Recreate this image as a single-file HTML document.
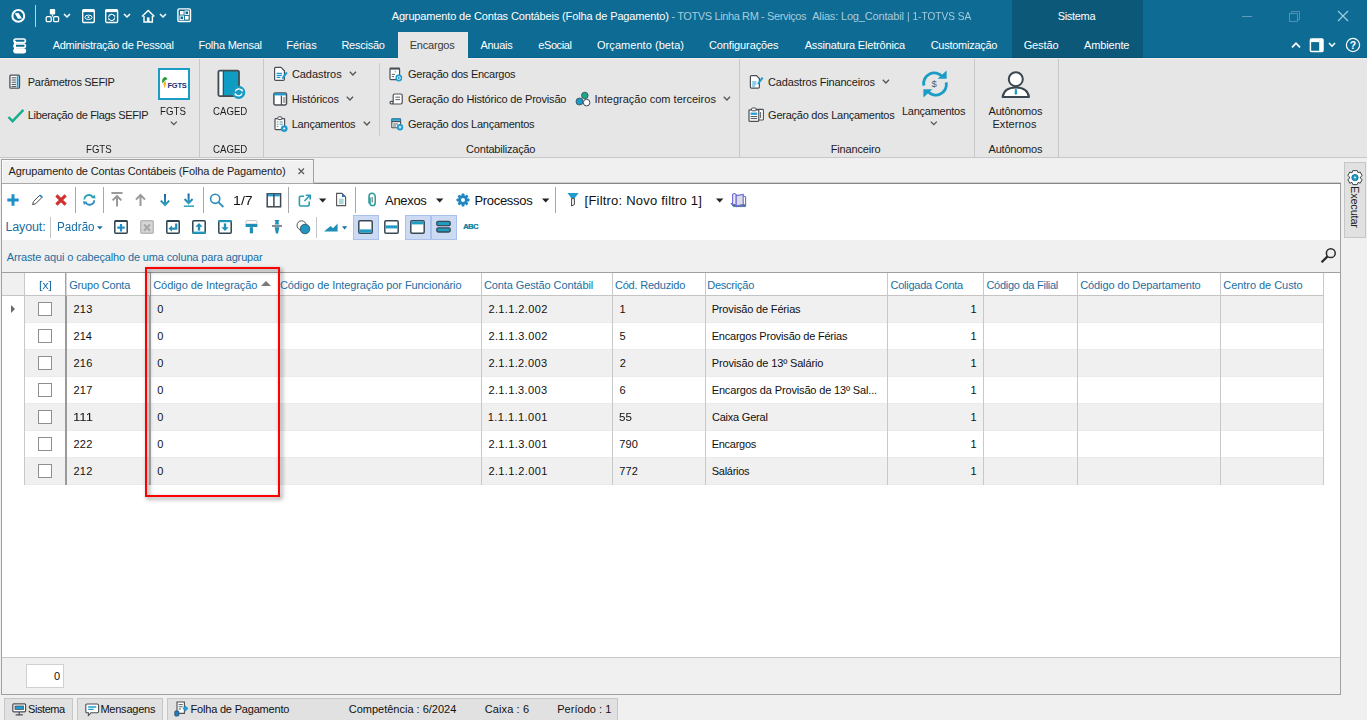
<!DOCTYPE html>
<html lang="pt-BR"><head><meta charset="utf-8"><title>Agrupamento de Contas Contábeis (Folha de Pagamento)</title>
<style>
html,body{margin:0;padding:0;background:#f0f0f0;}
body{width:1367px;height:720px;overflow:hidden;font-family:"Liberation Sans",sans-serif;}
#app{position:relative;width:1367px;height:720px;overflow:hidden;background:#f0f0f0;}
.t{position:absolute;white-space:pre;line-height:16px;height:16px;}
.b{position:absolute;box-sizing:border-box;}
svg{position:absolute;overflow:visible;}

</style></head><body>
<div id="app">
<div class="b" style="left:0px;top:0px;width:1367px;height:58px;background:#0d6b94;"></div>
<div class="b" style="left:1012px;top:0px;width:131px;height:58px;background:#0c5879;"></div>
<div class="b" style="left:398px;top:32px;width:70px;height:26px;background:#e6e6e6;"></div>
<div class="b" style="left:0px;top:57px;width:1012px;height:1px;background:#03628e;"></div>
<div class="b" style="left:1143px;top:57px;width:224px;height:1px;background:#03628e;"></div>
<div class="b" style="left:1012px;top:57px;width:131px;height:1px;background:#0a4f6e;"></div>
<div class="b" style="left:0px;top:58px;width:1367px;height:99px;background:#e6e6e6;"></div>
<div class="b" style="left:0px;top:58px;width:1367px;height:1px;background:#f3efee;"></div>
<div class="b" style="left:398px;top:57px;width:70px;height:2px;background:#e6e6e6;"></div>
<div class="b" style="left:0px;top:157px;width:1367px;height:1px;background:#c8c8c8;"></div>
<div class="b" style="left:199px;top:59px;width:1px;height:98px;background:#c8c8c8;"></div>
<div class="b" style="left:263px;top:59px;width:1px;height:98px;background:#c8c8c8;"></div>
<div class="b" style="left:739px;top:59px;width:1px;height:98px;background:#c8c8c8;"></div>
<div class="b" style="left:974px;top:59px;width:1px;height:98px;background:#c8c8c8;"></div>
<div class="b" style="left:1058px;top:59px;width:1px;height:98px;background:#c8c8c8;"></div>
<div class="b" style="left:379px;top:63px;width:1px;height:73px;background:#cdcdcd;"></div>
<div class="b" style="left:1px;top:183px;width:1340px;height:512px;background:#ffffff;border:1px solid #a0a0a0;border-top-color:#878787;"></div>
<div class="b" style="left:314px;top:182px;width:1027px;height:1px;background:#cfcfcf;"></div>
<div class="b" style="left:1px;top:159px;width:313px;height:25px;background:#f0f0f0;border:1px solid #a0a0a0;border-bottom:1px solid #a8a8a8;box-shadow:inset 1px 1px 0 #fbfbfb;"></div>
<div class="b" style="left:2px;top:240px;width:1338px;height:32px;background:#f0f0f0;"></div>
<div class="b" style="left:2px;top:272px;width:1338px;height:1px;background:#a0a0a0;"></div>
<div class="b" style="left:2px;top:273px;width:22px;height:22px;background:#f0f0f0;"></div>
<div class="b" style="left:2px;top:295px;width:1322px;height:1px;background:#c4c4c4;"></div>
<div class="b" style="left:25px;top:296px;width:1298px;height:27px;background:#f0f0f0;"></div>
<div class="b" style="left:25px;top:322px;width:1298px;height:1px;background:#ebebeb;"></div>
<div class="b" style="left:38px;top:302px;width:14px;height:14px;background:#ffffff;border:1px solid #8f8f8f;"></div>
<div class="b" style="left:25px;top:349px;width:1298px;height:1px;background:#ebebeb;"></div>
<div class="b" style="left:38px;top:329px;width:14px;height:14px;background:#ffffff;border:1px solid #8f8f8f;"></div>
<div class="b" style="left:25px;top:350px;width:1298px;height:27px;background:#f0f0f0;"></div>
<div class="b" style="left:25px;top:376px;width:1298px;height:1px;background:#ebebeb;"></div>
<div class="b" style="left:38px;top:356px;width:14px;height:14px;background:#ffffff;border:1px solid #8f8f8f;"></div>
<div class="b" style="left:25px;top:403px;width:1298px;height:1px;background:#ebebeb;"></div>
<div class="b" style="left:38px;top:383px;width:14px;height:14px;background:#ffffff;border:1px solid #8f8f8f;"></div>
<div class="b" style="left:25px;top:404px;width:1298px;height:27px;background:#f0f0f0;"></div>
<div class="b" style="left:25px;top:430px;width:1298px;height:1px;background:#ebebeb;"></div>
<div class="b" style="left:38px;top:410px;width:14px;height:14px;background:#ffffff;border:1px solid #8f8f8f;"></div>
<div class="b" style="left:25px;top:457px;width:1298px;height:1px;background:#ebebeb;"></div>
<div class="b" style="left:38px;top:437px;width:14px;height:14px;background:#ffffff;border:1px solid #8f8f8f;"></div>
<div class="b" style="left:25px;top:458px;width:1298px;height:27px;background:#f0f0f0;"></div>
<div class="b" style="left:25px;top:484px;width:1298px;height:1px;background:#ebebeb;"></div>
<div class="b" style="left:38px;top:464px;width:14px;height:14px;background:#ffffff;border:1px solid #8f8f8f;"></div>
<div class="b" style="left:24px;top:273px;width:1px;height:212px;background:#c8c8c8;"></div>
<div class="b" style="left:278px;top:273px;width:1px;height:212px;background:#c8c8c8;"></div>
<div class="b" style="left:481px;top:273px;width:1px;height:212px;background:#c8c8c8;"></div>
<div class="b" style="left:612px;top:273px;width:1px;height:212px;background:#c8c8c8;"></div>
<div class="b" style="left:705px;top:273px;width:1px;height:212px;background:#c8c8c8;"></div>
<div class="b" style="left:887px;top:273px;width:1px;height:212px;background:#c8c8c8;"></div>
<div class="b" style="left:983px;top:273px;width:1px;height:212px;background:#c8c8c8;"></div>
<div class="b" style="left:1077px;top:273px;width:1px;height:212px;background:#c8c8c8;"></div>
<div class="b" style="left:1220px;top:273px;width:1px;height:212px;background:#c8c8c8;"></div>
<div class="b" style="left:1323px;top:273px;width:1px;height:212px;background:#c8c8c8;"></div>
<div class="b" style="left:1323px;top:273px;width:1px;height:23px;background:#c8c8c8;"></div>
<div class="b" style="left:65px;top:273px;width:1px;height:23px;background:#a4a4a4;"></div>
<div class="b" style="left:66px;top:273px;width:1px;height:22px;background:#d4d4d4;"></div>
<div class="b" style="left:65px;top:296px;width:2px;height:189px;background:#9a9a9a;"></div>
<div class="b" style="left:150px;top:273px;width:1px;height:23px;background:#a4a4a4;"></div>
<div class="b" style="left:149px;top:296px;width:2px;height:189px;background:#b4b4b4;"></div>
<svg style="left:11px;top:305px" width="5" height="8"><path d="M0 0 L4 4 L0 8 Z" fill="#6a6a6a"/></svg>
<svg style="left:261px;top:281px" width="10" height="5"><path d="M0 5 L5 0 L10 5 Z" fill="#7a7a7a"/></svg>
<div class="b" style="left:2px;top:657px;width:1338px;height:1px;background:#c8c8c8;"></div>
<div class="b" style="left:2px;top:658px;width:1338px;height:36px;background:#f0f0f0;"></div>
<div class="b" style="left:26px;top:664px;width:38px;height:24px;background:#ffffff;border:1px solid #d0d0d0;"></div>
<div class="b" style="left:4px;top:698px;width:69px;height:22px;background:#e1e1e1;border:1px solid #c6c6c6;border-bottom:none;"></div>
<div class="b" style="left:77px;top:698px;width:86px;height:22px;background:#e1e1e1;border:1px solid #c6c6c6;border-bottom:none;"></div>
<div class="b" style="left:167px;top:698px;width:451px;height:22px;background:#e1e1e1;border:1px solid #c6c6c6;border-bottom:none;"></div>
<div class="b" style="left:1344px;top:162px;width:22px;height:76px;background:#e1e1e1;border:1px solid #c6c6c6;"></div>
<div class="b" style="left:145px;top:267px;width:135px;height:230px;border:2px solid #f00;filter:drop-shadow(2px 2px 2px rgba(0,0,0,.5));"></div>
<div class="b" style="left:75px;top:187px;width:1px;height:26px;background:#a8a8a8;"></div>
<div class="b" style="left:103px;top:187px;width:1px;height:26px;background:#a8a8a8;"></div>
<div class="b" style="left:203px;top:187px;width:1px;height:26px;background:#a8a8a8;"></div>
<div class="b" style="left:288px;top:187px;width:1px;height:26px;background:#a8a8a8;"></div>
<div class="b" style="left:355px;top:187px;width:1px;height:26px;background:#a8a8a8;"></div>
<div class="b" style="left:555px;top:187px;width:1px;height:26px;background:#a8a8a8;"></div>
<div class="b" style="left:50px;top:217px;width:1px;height:21px;background:#c4c4c4;"></div>
<div class="b" style="left:316px;top:217px;width:1px;height:21px;background:#c4c4c4;"></div>
<div class="b" style="left:353px;top:215px;width:26px;height:25px;background:#ccdaf3;border:1px solid #a9c1ec;"></div>
<div class="b" style="left:405px;top:215px;width:26px;height:25px;background:#ccdaf3;border:1px solid #a9c1ec;"></div>
<div class="b" style="left:431px;top:215px;width:26px;height:25px;background:#ccdaf3;border:1px solid #a9c1ec;"></div>
<!-- title bar icons -->
<svg style="left:10px;top:8px" width="18" height="18" viewBox="0 0 18 18"><circle cx="8.3" cy="7.9" r="5.9" fill="none" stroke="#fff" stroke-width="2"/><path d="M4.6 5.2 L8.6 5 L12 10.6 L8 10.8 Z" fill="#fff"/></svg>
<div class="b" style="left:35px;top:5px;width:1px;height:22px;background:#b9d3e0"></div>
<svg style="left:45px;top:8px" width="16" height="16" viewBox="0 0 16 16"><rect x="4.8" y="1" width="5.4" height="5.6" rx="1" fill="#fff"/><rect x="1.2" y="8.6" width="5" height="5" rx="1.2" fill="none" stroke="#fff" stroke-width="1.3"/><rect x="8.6" y="8.6" width="5" height="5" rx="1.2" fill="none" stroke="#fff" stroke-width="1.3"/><path d="M7.5 6.6 V8.6" stroke="#fff" stroke-width="1.2"/></svg>
<svg style="left:63px;top:13px" width="8" height="6" viewBox="0 0 8 6"><path d="M1 1 L4 4 L7 1" fill="none" stroke="#fff" stroke-width="1.5"/></svg>
<svg style="left:82px;top:9px" width="14" height="15" viewBox="0 0 14 15"><rect x="0.7" y="0.7" width="11.6" height="12.8" rx="1.2" fill="none" stroke="#fff" stroke-width="1.4"/><rect x="0.7" y="0.7" width="11.6" height="2.4" fill="#fff"/><ellipse cx="6.5" cy="8.3" rx="3.6" ry="2.2" fill="none" stroke="#fff" stroke-width="1"/><circle cx="6.5" cy="8.3" r="1" fill="#fff"/></svg>
<svg style="left:105px;top:9px" width="14" height="15" viewBox="0 0 14 15"><rect x="0.7" y="0.7" width="11.9" height="12.8" rx="1.2" fill="none" stroke="#fff" stroke-width="1.4"/><rect x="0.7" y="0.7" width="11.9" height="2.4" fill="#fff"/><path d="M3.6 8.2 A3 3 0 0 1 9.2 6.8 M9.7 8.6 A3 3 0 0 1 4.1 10" fill="none" stroke="#fff" stroke-width="1.1"/><path d="M8.2 6.2 L10.3 6.2 L10 8.2 Z M5.1 10.6 L3 10.6 L3.3 8.6 Z" fill="#fff"/></svg>
<svg style="left:123px;top:13px" width="8" height="6" viewBox="0 0 8 6"><path d="M1 1 L4 4 L7 1" fill="none" stroke="#fff" stroke-width="1.5"/></svg>
<svg style="left:141px;top:9px" width="15" height="15" viewBox="0 0 15 15"><path d="M1 7.6 L7.2 1.4 L13.4 7.6" fill="none" stroke="#fff" stroke-width="1.4"/><path d="M3 7 V13 H11.4 V7" fill="none" stroke="#fff" stroke-width="1.4"/><rect x="5.9" y="8.4" width="2.6" height="4.6" fill="#fff"/></svg>
<svg style="left:159px;top:13px" width="8" height="6" viewBox="0 0 8 6"><path d="M1 1 L4 4 L7 1" fill="none" stroke="#fff" stroke-width="1.5"/></svg>
<svg style="left:177px;top:8px" width="15" height="15" viewBox="0 0 15 15"><rect x="0.9" y="0.9" width="12.6" height="12.6" rx="1.2" fill="none" stroke="#fff" stroke-width="1.4"/><rect x="3" y="3" width="3.6" height="3.6" fill="#fff"/><rect x="8" y="3" width="3.6" height="3.6" fill="none" stroke="#fff" stroke-width="1"/><rect x="3" y="8" width="3.6" height="3.6" fill="none" stroke="#fff" stroke-width="1"/><rect x="8" y="8" width="3.6" height="3.6" fill="#fff"/></svg>
<!-- window controls -->
<div class="b" style="left:1242px;top:16px;width:10px;height:1px;background:#5e9cba"></div>
<svg style="left:1289px;top:11px" width="11" height="11" viewBox="0 0 11 11"><path d="M2.5 2.5 V0.5 H10.5 V8.5 H8.5" fill="none" stroke="#4f91b1" stroke-width="1"/><rect x="0.5" y="2.5" width="8" height="8" fill="none" stroke="#4f91b1" stroke-width="1"/></svg>
<svg style="left:1338px;top:11px" width="10" height="10" viewBox="0 0 10 10"><path d="M0 0 L10 10 M10 0 L0 10" stroke="#a9cfe0" stroke-width="1.1"/></svg>
<!-- tab row icons -->
<svg style="left:13px;top:38px" width="14" height="16" viewBox="0 0 14 16"><rect x="1" y="1" width="11.4" height="3.6" rx="1.8" fill="none" stroke="#fff" stroke-width="1.6"/><rect x="1" y="6" width="11.4" height="3.6" rx="1.8" fill="none" stroke="#fff" stroke-width="1.6"/><rect x="1" y="11" width="11.4" height="3.6" rx="1.8" fill="#fff" stroke="#fff" stroke-width="1.6"/><path d="M2 2.8 V13" stroke="#fff" stroke-width="2"/></svg>
<svg style="left:1291px;top:41px" width="10" height="8" viewBox="0 0 10 8"><path d="M1 6.4 L5 2.2 L9 6.4" fill="none" stroke="#fff" stroke-width="1.8"/></svg>
<svg style="left:1309px;top:38px" width="15" height="15" viewBox="0 0 15 15"><rect x="1.4" y="0.9" width="12.6" height="12.6" rx="1" fill="none" stroke="#fff" stroke-width="1.5"/><rect x="1.4" y="0.9" width="9" height="3.2" fill="#fff"/><rect x="10.2" y="0.9" width="3.8" height="12.6" fill="#fff"/></svg>
<svg style="left:1328px;top:42px" width="8" height="6" viewBox="0 0 8 6"><path d="M1 1 L4 4.2 L7 1" fill="none" stroke="#fff" stroke-width="1.5"/></svg>
<svg style="left:1345px;top:37px" width="16" height="16" viewBox="0 0 16 16"><circle cx="8" cy="8" r="6.6" fill="none" stroke="#fff" stroke-width="1.2"/><text x="8" y="12" font-family="Liberation Sans, sans-serif" font-size="10.5" font-weight="bold" fill="#fff" text-anchor="middle">?</text></svg>
<!-- doc tab close -->
<svg style="left:298px;top:168px" width="7" height="7" viewBox="0 0 7 7"><path d="M0.5 0.5 L6 6 M6 0.5 L0.5 6" stroke="#555" stroke-width="1.1"/></svg>
<!-- search icon (group panel) -->
<svg style="left:1320px;top:247px" width="17" height="17" viewBox="0 0 17 17"><circle cx="10.8" cy="6.2" r="4.4" fill="none" stroke="#2a2a2a" stroke-width="1.5"/><path d="M7.6 9.4 L1.6 15.2" stroke="#2a2a2a" stroke-width="2.2"/></svg>
<!-- toolbar row 1 -->
<svg style="left:7px;top:194px" width="12" height="12" viewBox="0 0 12 12"><path d="M6 0.3 V11.7 M0.3 6 H11.7" stroke="#1f8fc9" stroke-width="3"/></svg>
<svg style="left:31px;top:193px" width="13" height="13" viewBox="0 0 13 13"><path d="M1.6 11.6 L2.4 8.6 L9 2 L11.2 4.2 L4.6 10.8 Z" fill="#fff" stroke="#4a4a4a" stroke-width="1"/><path d="M8.2 2.8 L9.6 1.4 L11.8 3.6 L10.4 5 Z" fill="#2b8fd6"/></svg>
<svg style="left:55px;top:194px" width="12" height="12" viewBox="0 0 12 12"><path d="M1.4 1.4 L10.6 10.6 M10.6 1.4 L1.4 10.6" stroke="#d23030" stroke-width="3.2"/></svg>
<svg style="left:82px;top:193px" width="15" height="14" viewBox="0 0 15 14"><path d="M2.4 6.6 A4.6 4.6 0 0 1 11 4.4" fill="none" stroke="#2a9cb4" stroke-width="1.8"/><path d="M12.2 7.2 A4.6 4.6 0 0 1 3.6 9.4" fill="none" stroke="#2a8fc0" stroke-width="1.8"/><path d="M9.2 5 L13.6 5.6 L12.6 1.8 Z" fill="#2a9cb4"/><path d="M5.4 8.8 L1 8.2 L2 12 Z" fill="#2a8fc0"/></svg>
<svg style="left:111px;top:192px" width="12" height="15" viewBox="0 0 12 15"><path d="M0.4 1 H11.6" stroke="#9a9a9a" stroke-width="2"/><path d="M6 14.6 V4.6 M1.6 8.4 L6 4 L10.4 8.4" fill="none" stroke="#9a9a9a" stroke-width="2"/></svg>
<svg style="left:135px;top:193px" width="11" height="14" viewBox="0 0 11 14"><path d="M5.5 13 V2.2 M1 6.6 L5.5 2 L10 6.6" fill="none" stroke="#9a9a9a" stroke-width="2"/></svg>
<svg style="left:160px;top:193px" width="11" height="14" viewBox="0 0 11 14"><defs><linearGradient id="gd" x1="0" y1="0" x2="0" y2="1"><stop offset="0" stop-color="#1f5ca8"/><stop offset="1" stop-color="#2aa3ba"/></linearGradient></defs><path d="M5 1 V12 M0.8 7.6 L5 12 L9.2 7.6" fill="none" stroke="url(#gd)" stroke-width="2"/></svg>
<svg style="left:183px;top:193px" width="12" height="15" viewBox="0 0 12 15"><path d="M5.6 0.6 V10 M1.6 6 L5.6 10.2 L9.6 6" fill="none" stroke="url(#gd)" stroke-width="2"/><path d="M0.8 13.2 H11" stroke="#2aa3ba" stroke-width="1.5"/></svg>
<svg style="left:209px;top:193px" width="16" height="15" viewBox="0 0 16 15"><circle cx="6.2" cy="5.8" r="4.6" fill="none" stroke="#2a8fb8" stroke-width="1.6"/><path d="M9.4 9.2 L14.4 14" stroke="#2a8fb8" stroke-width="1.8"/></svg>
<svg style="left:266px;top:193px" width="16" height="15" viewBox="0 0 16 15"><rect x="1.2" y="0.8" width="13.4" height="13" fill="#fff" stroke="#404a52" stroke-width="1.5"/><rect x="2" y="1.2" width="11.8" height="2.2" fill="#1f9bd0"/><path d="M7.9 1 V14" stroke="#404a52" stroke-width="1.5"/></svg>
<svg style="left:298px;top:194px" width="14" height="14" viewBox="0 0 14 14"><path d="M6 2.2 H2.6 Q1.4 2.2 1.4 3.4 V10.8 Q1.4 12 2.6 12 H10 Q11.2 12 11.2 10.8 V7.6" fill="none" stroke="#2a9cb4" stroke-width="1.6"/><path d="M6.4 7 L11.6 1.8 M7.8 1.2 H12.2 V5.6" fill="none" stroke="#2a9cb4" stroke-width="1.6"/></svg>
<svg style="left:319px;top:198px" width="8" height="5" viewBox="0 0 8 5"><path d="M0 0.4 H7.4 L3.7 4.4 Z" fill="#222"/></svg>
<svg style="left:335px;top:192px" width="12" height="15" viewBox="0 0 12 15"><path d="M1.6 1.4 H7 L10.6 5 V13.6 H1.6 Z" fill="#fff" stroke="#555" stroke-width="1.1"/><path d="M7 1.4 L10.6 5 H7 Z" fill="#3a6fc0"/><rect x="4" y="6.6" width="4.6" height="5.6" fill="#a8d8d8"/></svg>
<svg style="left:368px;top:192px" width="10" height="16" viewBox="0 0 10 16"><path d="M2 5.4 V11 A2.6 2.6 0 0 0 7.2 11 V4.4 A3.1 3.1 0 0 0 1 4.4 V11.6" fill="none" stroke="#2a9a9a" stroke-width="1.5"/><path d="M4.2 5 V10.6" stroke="#777" stroke-width="1.2"/></svg>
<svg style="left:436px;top:198px" width="8" height="5" viewBox="0 0 8 5"><path d="M0 0.4 H7.4 L3.7 4.4 Z" fill="#222"/></svg>
<svg style="left:456px;top:193px" width="14" height="14" viewBox="0 0 14 14"><g transform="translate(7 7)" fill="#1f86c4"><circle r="4.6"/><g id="gt"><rect x="-1.5" y="-6.5" width="3" height="13" rx="0.8"/></g><use href="#gt" transform="rotate(45)"/><use href="#gt" transform="rotate(90)"/><use href="#gt" transform="rotate(135)"/><circle r="2" fill="#fff"/></g></svg>
<svg style="left:542px;top:198px" width="8" height="5" viewBox="0 0 8 5"><path d="M0 0.4 H7.4 L3.7 4.4 Z" fill="#222"/></svg>
<svg style="left:567px;top:192px" width="12" height="15" viewBox="0 0 12 15"><path d="M0.4 1 H11.6 L7.4 6.6 H4.6 Z" fill="#1f9bd0"/><path d="M4.6 6.6 H7.4 V12.4 L4.6 14 Z" fill="#fff" stroke="#444" stroke-width="1"/></svg>
<svg style="left:716px;top:198px" width="8" height="5" viewBox="0 0 8 5"><path d="M0 0.4 H7.4 L3.7 4.4 Z" fill="#222"/></svg>
<svg style="left:730px;top:192px" width="17" height="16" viewBox="0 0 17 16"><path d="M0.8 11 L3.4 14.6 H15.4 L14 12" fill="#3a7a6a" stroke="#3a7a6a" stroke-width="0.8"/><path d="M2.6 2.4 Q4.6 0.4 6.2 2.6 V14 Q4.6 11.6 2.6 13 Z" fill="#e6e6f4" stroke="#6a6ad8" stroke-width="1.1"/><path d="M6.2 3.6 L13.2 2.4 V12.6 L6.2 14 Z" fill="#dcdce8" stroke="#6a6ad8" stroke-width="1.1"/><path d="M13.2 4 L15.6 4.8 V14 L6.2 14" fill="none" stroke="#6a6ad8" stroke-width="1.1"/></svg>
<!-- toolbar row 2 -->
<svg style="left:97px;top:226px" width="6" height="4" viewBox="0 0 6 4"><path d="M0 0.2 H5.6 L2.8 3.6 Z" fill="#1a6ea3"/></svg>
<svg style="left:114px;top:220px" width="14" height="14" viewBox="0 0 14 14"><rect x="0.8" y="0.8" width="12.4" height="12.4" rx="1" fill="#fff" stroke="#2f4450" stroke-width="1.5"/><rect x="0.8" y="0.4" width="12.4" height="1.6" fill="#2f4450"/><path d="M7 4 V11.4 M3.3 7.7 H10.7" stroke="#1f8fc9" stroke-width="2.2"/></svg>
<svg style="left:140px;top:220px" width="14" height="14" viewBox="0 0 14 14"><rect x="0.8" y="0.8" width="12.4" height="12.4" rx="1" fill="#d6d6d6" stroke="#b8b8b8" stroke-width="1.5"/><path d="M4 4.6 L10 10.8 M10 4.6 L4 10.8" stroke="#a8a8a8" stroke-width="2.2"/></svg>
<svg style="left:166px;top:220px" width="14" height="14" viewBox="0 0 14 14"><rect x="0.8" y="0.8" width="12.4" height="12.4" rx="1" fill="#fff" stroke="#2f4450" stroke-width="1.5"/><rect x="0.8" y="0.4" width="12.4" height="1.6" fill="#2f4450"/><path d="M10.2 3.6 V8.6 H5" fill="none" stroke="#1f8fb8" stroke-width="2.2"/><path d="M6 5.4 V11.8 L2.4 8.6 Z" fill="#1f8fb8"/></svg>
<svg style="left:192px;top:220px" width="14" height="14" viewBox="0 0 14 14"><rect x="0.8" y="0.8" width="12.4" height="12.4" rx="1" fill="#fff" stroke="#2f4450" stroke-width="1.5"/><rect x="0.4" y="11.6" width="13.2" height="2.2" fill="#1f9bc4"/><path d="M7 10.6 V5.6" stroke="#1f8fb8" stroke-width="2.4"/><path d="M3.4 6.8 L7 3 L10.6 6.8 Z" fill="#1f8fb8"/></svg>
<svg style="left:218px;top:220px" width="14" height="14" viewBox="0 0 14 14"><rect x="0.8" y="0.8" width="12.4" height="12.4" rx="1" fill="#fff" stroke="#2f4450" stroke-width="1.5"/><rect x="0.4" y="0.2" width="13.2" height="2" fill="#1f9bc4"/><path d="M7 3.4 V8.4" stroke="#1f8fb8" stroke-width="2.4"/><path d="M3.4 7.2 L7 11 L10.6 7.2 Z" fill="#1f8fb8"/></svg>
<svg style="left:245px;top:220px" width="13" height="14" viewBox="0 0 13 14"><rect x="1" y="0.6" width="11" height="3.4" rx="0.8" fill="#fff" stroke="#c0c0c0" stroke-width="0.9"/><rect x="0.6" y="4" width="11.8" height="3" rx="0.6" fill="#1f8fb8"/><rect x="4.8" y="7" width="3.2" height="6.4" rx="1.2" fill="#1f8fb8"/></svg>
<svg style="left:271px;top:219px" width="12" height="16" viewBox="0 0 12 16"><path d="M3.6 1 H8.4 L7.4 3.4 L8.4 5.6 H3.6 L4.6 3.4 Z" fill="#1f8fb8"/><path d="M1 7 H11" stroke="#2f4450" stroke-width="1.2"/><path d="M3.6 8.2 H8.4 L7 14.6 H5 Z" fill="#1f8fb8"/></svg>
<svg style="left:296px;top:220px" width="15" height="15" viewBox="0 0 15 15"><circle cx="5.6" cy="5.4" r="4.6" fill="#fff" stroke="#555" stroke-width="1"/><circle cx="9" cy="9" r="4.8" fill="#1f95c0" stroke="#2f4450" stroke-width="0.8"/></svg>
<svg style="left:324px;top:223px" width="14" height="9" viewBox="0 0 14 9"><path d="M0 8.6 L6.6 3 L9 5.2 L13.6 0.4 V8.6 Z" fill="#1f8fb8"/></svg>
<svg style="left:342px;top:226px" width="6" height="4" viewBox="0 0 6 4"><path d="M0 0.2 H5.2 L2.6 3.4 Z" fill="#1a6ea3"/></svg>
<svg style="left:358px;top:220px" width="15" height="14" viewBox="0 0 15 14"><rect x="0.8" y="0.8" width="13.4" height="12.4" rx="1.2" fill="#fff" stroke="#3a4a54" stroke-width="1.5"/><rect x="1.4" y="9.4" width="12.2" height="3.2" fill="#1f9bc4"/></svg>
<svg style="left:384px;top:220px" width="15" height="14" viewBox="0 0 15 14"><rect x="0.8" y="0.8" width="13.4" height="12.4" rx="1.2" fill="#fff" stroke="#3a4a54" stroke-width="1.5"/><rect x="1.4" y="5.4" width="12.2" height="3" fill="#1f9bc4"/></svg>
<svg style="left:410px;top:220px" width="15" height="14" viewBox="0 0 15 14"><rect x="0.8" y="0.8" width="13.4" height="12.4" rx="1.2" fill="#fff" stroke="#3a4a54" stroke-width="1.5"/><rect x="1.4" y="1.4" width="12.2" height="3" fill="#1f9bc4"/></svg>
<svg style="left:436px;top:220px" width="15" height="14" viewBox="0 0 15 14"><rect x="0.8" y="1.4" width="13.4" height="4.2" rx="1.4" fill="#1f9bc4" stroke="#3a4a54" stroke-width="1.3"/><rect x="0.8" y="7.8" width="13.4" height="4.2" rx="1.4" fill="#1f9bc4" stroke="#3a4a54" stroke-width="1.3"/></svg>
<span class="t" style="left:463px;top:218.6px;font-size:7.5px;font-weight:bold;color:#1f8aa4;letter-spacing:-0.45px;text-shadow:0.4px 0 0 #1f8aa4">ABC</span>
<!-- ribbon: FGTS group -->
<svg style="left:9px;top:74px" width="12" height="16" viewBox="0 0 12 16"><rect x="0.9" y="1.2" width="9.6" height="13" rx="1" fill="#fff" stroke="#4a4f54" stroke-width="1.3"/><path d="M2.6 3.8 H7 M2.6 6 H7 M2.6 8.2 H7 M2.6 10.4 H7 M2.6 12.4 H7" stroke="#4a4f54" stroke-width="1"/><path d="M8.6 2.2 V13.4" stroke="#1f9bd0" stroke-width="1.8"/></svg>
<svg style="left:7px;top:108px" width="18" height="16" viewBox="0 0 18 16"><path d="M1.4 9 L5.6 13.2 L16.4 1.8" fill="none" stroke="#1aae8c" stroke-width="2.4"/></svg>
<div class="b" style="left:158px;top:68px;width:32px;height:32px;background:#fff;border:2px solid #1a9cc4"></div>
<svg style="left:160px;top:76px" width="9" height="14" viewBox="0 0 9 14"><path d="M4.4 1 Q1 3.4 2.6 7.4 Q4.2 4.2 7.6 3 Q6.6 1.2 4.4 1 Z" fill="#2c9a3c"/><path d="M3.4 8 Q3.6 5.6 6 5 Q6.4 8.4 4.4 12.6 Q4.4 10 3.4 8 Z" fill="#f2b21a"/></svg>
<span class="t" style="left:167.4px;top:77.5px;font-size:7.5px;font-weight:bold;color:#1c2f7a;letter-spacing:-0.2px">FGTS</span>
<svg style="left:170px;top:121px" width="8" height="5" viewBox="0 0 8 5"><path d="M0.8 0.6 L3.8 3.6 L6.8 0.6" fill="none" stroke="#555" stroke-width="1.3"/></svg>
<!-- CAGED -->
<svg style="left:216px;top:68px" width="32" height="34" viewBox="0 0 32 34"><rect x="2.4" y="2.6" width="20.6" height="25.6" rx="1.6" fill="#0e9cc2" stroke="#444b50" stroke-width="1.8"/><rect x="3.4" y="3.6" width="3.4" height="23.6" fill="#fff"/><path d="M7.4 3 V28" stroke="#444b50" stroke-width="1.2"/><circle cx="22.7" cy="24.4" r="6.6" fill="#1a9cc4"/><path d="M19.4 23.4 A3.5 3.5 0 0 1 25.6 22.4 M26 25.4 A3.5 3.5 0 0 1 19.8 26.4" fill="none" stroke="#fff" stroke-width="1.4"/><path d="M24.4 21.4 L27 21.6 L26.4 24.2 Z M21 27.4 L18.4 27.2 L19 24.6 Z" fill="#fff"/></svg>
<!-- Contabilização col 1 -->
<svg style="left:273px;top:66px" width="15" height="16" viewBox="0 0 15 16"><path d="M1.6 2.6 Q1.6 1.4 2.8 1.4 H8 L11.4 4.8 V13.2 Q11.4 14.4 10.2 14.4 H2.8 Q1.6 14.4 1.6 13.2 Z" fill="#fff" stroke="#4a4f54" stroke-width="1.2"/><path d="M3.6 7.4 H9 M3.6 9.4 H9 M3.6 11.4 H7.4" stroke="#1f9bd0" stroke-width="1.1"/><path d="M9.4 12.6 L13.8 6.4" stroke="#1f9bd0" stroke-width="2"/></svg>
<svg style="left:273px;top:92px" width="15" height="14" viewBox="0 0 15 14"><rect x="0.9" y="0.9" width="12.6" height="12" rx="1.4" fill="#fff" stroke="#4a4f54" stroke-width="1.5"/><rect x="1.2" y="1.2" width="12" height="2.2" fill="#1f9bd0"/><path d="M8.4 3.4 V13" stroke="#4a4f54" stroke-width="1.2"/><path d="M9.8 6 H12.2 M9.8 8 H12.2 M9.8 10 H12.2" stroke="#4a4f54" stroke-width="0.9"/></svg>
<svg style="left:274px;top:116px" width="15" height="17" viewBox="0 0 15 17"><rect x="1" y="2.6" width="9.6" height="11" rx="0.8" fill="#fff" stroke="#4a4f54" stroke-width="1.2"/><rect x="3.8" y="0.8" width="4" height="2.8" rx="0.8" fill="#fff" stroke="#4a4f54" stroke-width="1"/><path d="M2.8 6 H4.4 M5.6 6 H8.8 M2.8 8.2 H4.4 M5.6 8.2 H8.8 M2.8 10.4 H4.4" stroke="#4a8a9a" stroke-width="0.9"/><circle cx="10.2" cy="12.6" r="3.4" fill="#1f9bd0"/><circle cx="10.2" cy="12.6" r="1" fill="#fff"/></svg>
<svg style="left:349px;top:71px" width="8" height="6" viewBox="0 0 8 6"><path d="M0.8 0.8 L3.9 4 L7 0.8" fill="none" stroke="#555" stroke-width="1.3"/></svg>
<svg style="left:346px;top:96px" width="8" height="6" viewBox="0 0 8 6"><path d="M0.8 0.8 L3.9 4 L7 0.8" fill="none" stroke="#555" stroke-width="1.3"/></svg>
<svg style="left:363px;top:121px" width="8" height="6" viewBox="0 0 8 6"><path d="M0.8 0.8 L3.9 4 L7 0.8" fill="none" stroke="#555" stroke-width="1.3"/></svg>
<!-- Contabilização col 2 -->
<svg style="left:389px;top:67px" width="15" height="16" viewBox="0 0 15 16"><rect x="1" y="1.2" width="9.6" height="11.4" rx="0.8" fill="#fff" stroke="#4a4f54" stroke-width="1.2"/><rect x="1" y="1" width="9.6" height="1.6" fill="#4a4f54"/><path d="M2.8 7.4 H6 M2.8 9.6 H5" stroke="#4a4f54" stroke-width="0.9"/><path d="M5.6 4 L7 5.4" stroke="#1f9bd0" stroke-width="0.9"/><circle cx="9.8" cy="11" r="3.4" fill="#1f9bd0"/><circle cx="9.8" cy="11" r="1.5" fill="none" stroke="#fff" stroke-width="0.8"/></svg>
<svg style="left:389px;top:93px" width="15" height="13" viewBox="0 0 15 13"><path d="M4.2 8.4 V2.4 Q4.2 1 5.6 1 H11.8 Q13.2 1 13.2 2.4 V9.6 Q13.2 11 11.8 11 H2.4 Q1 11 1 9.6 Q1 8.4 2.4 8.4 H4.2 Q4.2 11 2.6 11" fill="#fff" stroke="#4a4f54" stroke-width="1.2"/><path d="M6.4 4.2 H11 M6.4 6.6 H11" stroke="#4a4f54" stroke-width="0.9"/></svg>
<svg style="left:391px;top:118px" width="13" height="13" viewBox="0 0 13 13"><rect x="0.8" y="0.8" width="8.8" height="9" rx="0.6" fill="#fff" stroke="#4a4f54" stroke-width="1.1"/><rect x="0.8" y="0.6" width="8.8" height="2.2" fill="#1f9bd0"/><rect x="0.8" y="3" width="8.8" height="1.2" fill="#4a4f54"/><path d="M2.2 6 H7 M2.2 8 H5" stroke="#4a4f54" stroke-width="0.9"/><circle cx="9" cy="9.2" r="3.2" fill="#1f9bd0"/><rect x="7.8" y="8" width="2.4" height="2.4" fill="#bfe6f4"/></svg>
<svg style="left:575px;top:91px" width="16" height="16" viewBox="0 0 16 16"><circle cx="9.8" cy="4.5" r="3.3" fill="#19a88c" stroke="#3a4a55" stroke-width="0.8"/><circle cx="4.5" cy="10.5" r="3.5" fill="#1e98c8" stroke="#3a4a55" stroke-width="0.8"/><circle cx="11.6" cy="11.6" r="3.3" fill="#fff" stroke="#3a4a55" stroke-width="1"/></svg>
<svg style="left:723px;top:96px" width="8" height="6" viewBox="0 0 8 6"><path d="M0.8 0.8 L3.9 4 L7 0.8" fill="none" stroke="#555" stroke-width="1.3"/></svg>
<!-- Financeiro -->
<svg style="left:749px;top:74px" width="15" height="16" viewBox="0 0 15 16"><path d="M1.4 2.8 Q1.4 1.6 2.6 1.6 H7.4 L10.4 4.6 V13 Q10.4 14.2 9.2 14.2 H2.6 Q1.4 14.2 1.4 13 Z" fill="#fff" stroke="#4a4f54" stroke-width="1.2"/><path d="M3.2 8 H7.4 M3.2 10 H7.4 M3.2 12 H6" stroke="#1f9bd0" stroke-width="1.1"/><path d="M9 10 L13.6 3.6" stroke="#1f9bd0" stroke-width="2"/></svg>
<svg style="left:748px;top:107px" width="17" height="16" viewBox="0 0 17 16"><rect x="7" y="2.4" width="8.4" height="10.6" rx="0.8" fill="#fff" stroke="#4a4f54" stroke-width="1.1"/><path d="M12.6 5 V11" stroke="#4a4f54" stroke-width="0.9"/><rect x="1" y="2.8" width="9.8" height="11.6" rx="0.8" fill="#fff" stroke="#4a4f54" stroke-width="1.2"/><rect x="3.6" y="1" width="4.4" height="2.8" rx="0.8" fill="#fff" stroke="#4a4f54" stroke-width="1"/><rect x="2.6" y="5.6" width="6.6" height="2.2" fill="#1f9bd0"/><path d="M2.6 9.6 H9.2 M2.6 11.6 H9.2" stroke="#4a4f54" stroke-width="1"/></svg>
<svg style="left:882px;top:79px" width="8" height="6" viewBox="0 0 8 6"><path d="M0.8 0.8 L3.9 4 L7 0.8" fill="none" stroke="#555" stroke-width="1.3"/></svg>
<svg style="left:919px;top:68px" width="32" height="32" viewBox="0 0 32 32"><path d="M4.8 17.6 A10.6 10.6 0 0 1 23.4 8.8" fill="none" stroke="#1a9cc4" stroke-width="2.8"/><path d="M27.2 14.4 A10.6 10.6 0 0 1 8.6 23.2" fill="none" stroke="#1a9cc4" stroke-width="2.8"/><path d="M18.6 10.8 H27.6 V2.6 Z" fill="#1a9cc4"/><path d="M13.4 21.2 H4.4 V29.4 Z" fill="#1a9cc4"/><text x="15.2" y="19.4" font-family="Liberation Sans, sans-serif" font-size="9.5" fill="#5a5f64" text-anchor="middle">$</text></svg>
<svg style="left:930px;top:121px" width="8" height="5" viewBox="0 0 8 5"><path d="M0.8 0.6 L3.8 3.6 L6.8 0.6" fill="none" stroke="#555" stroke-width="1.3"/></svg>
<!-- Autônomos -->
<svg style="left:1000px;top:68px" width="32" height="32" viewBox="0 0 32 32"><path d="M2.6 29 Q4 19.4 15.8 19.4 Q27.6 19.4 29 29 Z" fill="#fff" stroke="#3a474e" stroke-width="2" stroke-linejoin="round"/><circle cx="15.8" cy="11.2" r="7" fill="#fff" stroke="#3a474e" stroke-width="2"/><path d="M15 20.8 H16.8 L17.2 25.6 L15.9 27 L14.6 25.6 Z" fill="#1a9cc4"/></svg>
<!-- status bar icons -->
<svg style="left:12px;top:703px" width="15" height="13" viewBox="0 0 15 13"><rect x="0.8" y="0.8" width="12.8" height="8" rx="1" fill="#fff" stroke="#4a4f54" stroke-width="1.2"/><rect x="3" y="3" width="8.4" height="3.4" fill="#1f9bd0" stroke="#4a4f54" stroke-width="0.8"/><path d="M7.2 9 V11.4 M3.6 11.8 H10.8" stroke="#4a4f54" stroke-width="1.2"/></svg>
<svg style="left:85px;top:703px" width="15" height="14" viewBox="0 0 15 14"><path d="M2 1 H12.4 Q13.6 1 13.6 2.2 V8.6 Q13.6 9.8 12.4 9.8 H6 L3.4 12.4 V9.8 H2 Q0.8 9.8 0.8 8.6 V2.2 Q0.8 1 2 1 Z" fill="#fff" stroke="#4a4f54" stroke-width="1.1"/><path d="M3.2 4 H11.2 M3.2 6.4 H8.6" stroke="#1f9bd0" stroke-width="1.3"/></svg>
<svg style="left:174px;top:701px" width="16" height="16" viewBox="0 0 16 16"><path d="M3 1 H10.4 V12.4 H3 Z" fill="#fff" stroke="#4a4f54" stroke-width="1.1"/><path d="M4.6 3.6 H8.8 M4.6 5.8 H8.8 M4.6 8 H7" stroke="#4a4f54" stroke-width="0.9"/><path d="M8.6 7.4 L11.4 4.4 L14.4 7.4 L11.4 10.4 Z" fill="#1f9bd0"/><rect x="0.8" y="10" width="4" height="5" rx="0.8" fill="#1f7fc0" stroke="#2a4a6a" stroke-width="0.8"/></svg>
<!-- executar -->
<svg style="left:1347px;top:169.7px" width="16" height="16" viewBox="0 0 16 16"><g transform="translate(8 7.6)"><g fill="#fff" stroke="#3a474e" stroke-width="1"><path d="M-2.2 -7 H2.2 L3 -4.8 L5.2 -5.6 L7.2 -2 L5.4 -0.6 V0.6 L7.2 2 L5.2 5.6 L3 4.8 L2.2 7 H-2.2 L-3 4.8 L-5.2 5.6 L-7.2 2 L-5.4 0.6 V-0.6 L-7.2 -2 L-5.2 -5.6 L-3 -4.8 Z" stroke-linejoin="round"/></g><circle r="3.2" fill="#1a9cc4" stroke="#15708c" stroke-width="0.8"/><circle r="1" fill="#e8f6fb"/></g></svg>
<span class="t" style="left:1363px;top:186.3px;font-size:11px;color:#222;letter-spacing:-0.2px;transform-origin:0 0;transform:rotate(90deg);line-height:16px">Executar</span>

<span class="t" style="left:391.7px;top:8.0px;font-size:11px;color:#ffffff;letter-spacing:-0.141px;">Agrupamento de Contas Contábeis (Folha de Pagamento)</span>
<span class="t" style="left:671.4px;top:8.0px;font-size:11px;color:#a8cbdc;letter-spacing:-0.380px;">- TOTVS Linha RM - Serviços</span>
<span class="t" style="left:812.2px;top:8.0px;font-size:11px;color:#a8cbdc;letter-spacing:-0.170px;">Alias: Log_Contabil</span>
<span class="t" style="left:907.2px;top:8.0px;font-size:11px;color:#a8cbdc;letter-spacing:0.000px;transform:scaleX(0.919);transform-origin:0 0;">| 1-TOTVS SA</span>
<span class="t" style="left:1057.7px;top:8.0px;font-size:11px;color:#ffffff;letter-spacing:-0.318px;">Sistema</span>
<span class="t" style="left:52.7px;top:37.0px;font-size:11px;color:#ffffff;letter-spacing:-0.262px;">Administração de Pessoal</span>
<span class="t" style="left:198.5px;top:37.0px;font-size:11px;color:#ffffff;letter-spacing:-0.231px;">Folha Mensal</span>
<span class="t" style="left:286.2px;top:37.0px;font-size:11px;color:#ffffff;letter-spacing:-0.023px;">Férias</span>
<span class="t" style="left:341.4px;top:37.0px;font-size:11px;color:#ffffff;letter-spacing:-0.253px;">Rescisão</span>
<span class="t" style="left:480.5px;top:37.0px;font-size:11px;color:#ffffff;letter-spacing:-0.295px;">Anuais</span>
<span class="t" style="left:538.3px;top:37.0px;font-size:11px;color:#ffffff;letter-spacing:-0.425px;">eSocial</span>
<span class="t" style="left:597.0px;top:37.0px;font-size:11px;color:#ffffff;letter-spacing:0.052px;">Orçamento (beta)</span>
<span class="t" style="left:708.9px;top:37.0px;font-size:11px;color:#ffffff;letter-spacing:-0.105px;">Configurações</span>
<span class="t" style="left:804.7px;top:37.0px;font-size:11px;color:#ffffff;letter-spacing:-0.173px;">Assinatura Eletrônica</span>
<span class="t" style="left:930.7px;top:37.0px;font-size:11px;color:#ffffff;letter-spacing:-0.269px;">Customização</span>
<span class="t" style="left:1023.7px;top:37.0px;font-size:11px;color:#ffffff;letter-spacing:-0.129px;">Gestão</span>
<span class="t" style="left:1084.1px;top:37.0px;font-size:11px;color:#ffffff;letter-spacing:-0.165px;">Ambiente</span>
<span class="t" style="left:409.7px;top:37.0px;font-size:11px;color:#3a3a3a;letter-spacing:-0.202px;">Encargos</span>
<span class="t" style="left:27.8px;top:74.0px;font-size:11px;color:#1c1c1c;letter-spacing:-0.308px;">Parâmetros SEFIP</span>
<span class="t" style="left:27.8px;top:107.0px;font-size:11px;color:#1c1c1c;letter-spacing:-0.328px;">Liberação de Flags SEFIP</span>
<span class="t" style="left:159.8px;top:103.0px;font-size:11px;color:#1c1c1c;letter-spacing:0.000px;transform:scaleX(0.882);transform-origin:0 0;">FGTS</span>
<span class="t" style="left:86.0px;top:140.8px;font-size:11px;color:#1c1c1c;letter-spacing:0.000px;transform:scaleX(0.875);transform-origin:0 0;">FGTS</span>
<span class="t" style="left:213.1px;top:103.0px;font-size:11px;color:#1c1c1c;letter-spacing:0.000px;transform:scaleX(0.876);transform-origin:0 0;">CAGED</span>
<span class="t" style="left:213.1px;top:140.8px;font-size:11px;color:#1c1c1c;letter-spacing:0.000px;transform:scaleX(0.876);transform-origin:0 0;">CAGED</span>
<span class="t" style="left:291.9px;top:66.2px;font-size:11px;color:#1c1c1c;letter-spacing:-0.048px;">Cadastros</span>
<span class="t" style="left:291.7px;top:91.2px;font-size:11px;color:#1c1c1c;letter-spacing:-0.107px;">Históricos</span>
<span class="t" style="left:291.7px;top:116.2px;font-size:11px;color:#1c1c1c;letter-spacing:-0.213px;">Lançamentos</span>
<span class="t" style="left:408.0px;top:66.2px;font-size:11px;color:#1c1c1c;letter-spacing:-0.261px;">Geração dos Encargos</span>
<span class="t" style="left:408.0px;top:91.2px;font-size:11px;color:#1c1c1c;letter-spacing:-0.195px;">Geração do Histórico de Provisão</span>
<span class="t" style="left:408.0px;top:116.2px;font-size:11px;color:#1c1c1c;letter-spacing:-0.249px;">Geração dos Lançamentos</span>
<span class="t" style="left:594.5px;top:91.2px;font-size:11px;color:#1c1c1c;letter-spacing:0.014px;">Integração com terceiros</span>
<span class="t" style="left:466.1px;top:140.8px;font-size:11px;color:#1c1c1c;letter-spacing:-0.215px;">Contabilização</span>
<span class="t" style="left:768.1px;top:74.0px;font-size:11px;color:#1c1c1c;letter-spacing:-0.163px;">Cadastros Financeiros</span>
<span class="t" style="left:768.1px;top:107.0px;font-size:11px;color:#1c1c1c;letter-spacing:-0.249px;">Geração dos Lançamentos</span>
<span class="t" style="left:902.0px;top:103.3px;font-size:11px;color:#1c1c1c;letter-spacing:-0.263px;">Lançamentos</span>
<span class="t" style="left:830.8px;top:140.8px;font-size:11px;color:#1c1c1c;letter-spacing:-0.177px;">Financeiro</span>
<span class="t" style="left:988.5px;top:103.3px;font-size:11px;color:#1c1c1c;letter-spacing:-0.209px;">Autônomos</span>
<span class="t" style="left:992.4px;top:116.0px;font-size:11px;color:#1c1c1c;letter-spacing:0.112px;">Externos</span>
<span class="t" style="left:988.5px;top:141.0px;font-size:11px;color:#1c1c1c;letter-spacing:-0.209px;">Autônomos</span>
<span class="t" style="left:8.5px;top:163.0px;font-size:11px;color:#1c1c1c;letter-spacing:-0.143px;">Agrupamento de Contas Contábeis (Folha de Pagamento)</span>
<span class="t" style="left:232.9px;top:193.0px;font-size:13px;color:#111;letter-spacing:0.000px;transform:scaleX(1.094);transform-origin:0 0;">1/7</span>
<span class="t" style="left:385.1px;top:193.0px;font-size:13px;color:#111;letter-spacing:-0.333px;">Anexos</span>
<span class="t" style="left:474.5px;top:193.0px;font-size:13px;color:#111;letter-spacing:-0.320px;">Processos</span>
<span class="t" style="left:584.6px;top:193.0px;font-size:13px;color:#111;letter-spacing:0.210px;">[Filtro: Novo filtro 1]</span>
<span class="t" style="left:5.4px;top:219.0px;font-size:12.5px;color:#1a6ea3;letter-spacing:-0.117px;">Layout:</span>
<span class="t" style="left:56.5px;top:219.0px;font-size:12.5px;color:#1a6ea3;letter-spacing:0.000px;transform:scaleX(0.933);transform-origin:0 0;">Padrão</span>
<span class="t" style="left:6.7px;top:249.0px;font-size:11px;color:#1a6ea3;letter-spacing:-0.138px;">Arraste aqui o cabeçalho de uma coluna para agrupar</span>
<span class="t" style="left:39.0px;top:277.0px;font-size:11px;color:#1a6ea3;letter-spacing:0.000px;transform:scaleX(1.108);transform-origin:0 0;">[x]</span>
<span class="t" style="left:69.2px;top:277.0px;font-size:11px;color:#1a6ea3;letter-spacing:-0.186px;">Grupo Conta</span>
<span class="t" style="left:153.2px;top:277.0px;font-size:11px;color:#1a6ea3;letter-spacing:-0.047px;">Código de Integração</span>
<span class="t" style="left:279.9px;top:277.0px;font-size:11px;color:#1a6ea3;letter-spacing:-0.087px;">Código de Integração por Funcionário</span>
<span class="t" style="left:483.9px;top:277.0px;font-size:11px;color:#1a6ea3;letter-spacing:-0.099px;">Conta Gestão Contábil</span>
<span class="t" style="left:614.9px;top:277.0px;font-size:11px;color:#1a6ea3;letter-spacing:-0.197px;">Cód. Reduzido</span>
<span class="t" style="left:707.2px;top:277.0px;font-size:11px;color:#1a6ea3;letter-spacing:-0.231px;">Descrição</span>
<span class="t" style="left:890.5px;top:277.0px;font-size:11px;color:#1a6ea3;letter-spacing:-0.241px;">Coligada Conta</span>
<span class="t" style="left:986.4px;top:277.0px;font-size:11px;color:#1a6ea3;letter-spacing:-0.261px;">Código da Filial</span>
<span class="t" style="left:1080.3px;top:277.0px;font-size:11px;color:#1a6ea3;letter-spacing:-0.118px;">Código do Departamento</span>
<span class="t" style="left:1223.3px;top:277.0px;font-size:11px;color:#1a6ea3;letter-spacing:-0.049px;">Centro de Custo</span>
<span class="t" style="left:73.4px;top:301.0px;font-size:11px;color:#111;letter-spacing:0.324px;">213</span>
<span class="t" style="left:157.3px;top:301.0px;font-size:11px;color:#111;letter-spacing:0.000px;">0</span>
<span class="t" style="left:488.4px;top:301.0px;font-size:11px;color:#111;letter-spacing:0.383px;">2.1.1.2.002</span>
<span class="t" style="left:619.4px;top:301.0px;font-size:11px;color:#111;letter-spacing:0.000px;">1</span>
<span class="t" style="left:711.7px;top:301.0px;font-size:11px;color:#111;letter-spacing:-0.165px;">Provisão de Férias</span>
<span class="t" style="left:970.5px;top:301.0px;font-size:11px;color:#111;letter-spacing:0.000px;">1</span>
<span class="t" style="left:73.4px;top:328.0px;font-size:11px;color:#111;letter-spacing:0.124px;">214</span>
<span class="t" style="left:157.3px;top:328.0px;font-size:11px;color:#111;letter-spacing:0.000px;">0</span>
<span class="t" style="left:488.4px;top:328.0px;font-size:11px;color:#111;letter-spacing:0.383px;">2.1.1.3.002</span>
<span class="t" style="left:619.6px;top:328.0px;font-size:11px;color:#111;letter-spacing:0.000px;">5</span>
<span class="t" style="left:711.7px;top:328.0px;font-size:11px;color:#111;letter-spacing:-0.210px;">Encargos Provisão de Férias</span>
<span class="t" style="left:970.5px;top:328.0px;font-size:11px;color:#111;letter-spacing:0.000px;">1</span>
<span class="t" style="left:73.4px;top:355.0px;font-size:11px;color:#111;letter-spacing:0.330px;">216</span>
<span class="t" style="left:157.3px;top:355.0px;font-size:11px;color:#111;letter-spacing:0.000px;">0</span>
<span class="t" style="left:488.4px;top:355.0px;font-size:11px;color:#111;letter-spacing:0.367px;">2.1.1.2.003</span>
<span class="t" style="left:619.7px;top:355.0px;font-size:11px;color:#111;letter-spacing:0.000px;">2</span>
<span class="t" style="left:711.7px;top:355.0px;font-size:11px;color:#111;letter-spacing:-0.138px;">Provisão de 13º Salário</span>
<span class="t" style="left:970.5px;top:355.0px;font-size:11px;color:#111;letter-spacing:0.000px;">1</span>
<span class="t" style="left:73.4px;top:382.0px;font-size:11px;color:#111;letter-spacing:0.287px;">217</span>
<span class="t" style="left:157.3px;top:382.0px;font-size:11px;color:#111;letter-spacing:0.000px;">0</span>
<span class="t" style="left:488.4px;top:382.0px;font-size:11px;color:#111;letter-spacing:0.367px;">2.1.1.3.003</span>
<span class="t" style="left:619.6px;top:382.0px;font-size:11px;color:#111;letter-spacing:0.000px;">6</span>
<span class="t" style="left:711.7px;top:382.0px;font-size:11px;color:#111;letter-spacing:-0.149px;">Encargos da Provisão de 13º Sal...</span>
<span class="t" style="left:970.5px;top:382.0px;font-size:11px;color:#111;letter-spacing:0.000px;">1</span>
<span class="t" style="left:72.6px;top:409.0px;font-size:11px;color:#111;letter-spacing:0.000px;transform:scaleX(1.194);transform-origin:0 0;">111</span>
<span class="t" style="left:157.3px;top:409.0px;font-size:11px;color:#111;letter-spacing:0.000px;">0</span>
<span class="t" style="left:487.8px;top:409.0px;font-size:11px;color:#111;letter-spacing:0.447px;">1.1.1.1.001</span>
<span class="t" style="left:619.3px;top:409.0px;font-size:11px;color:#111;letter-spacing:0.000px;transform:scaleX(1.056);transform-origin:0 0;">55</span>
<span class="t" style="left:711.9px;top:409.0px;font-size:11px;color:#111;letter-spacing:-0.209px;">Caixa Geral</span>
<span class="t" style="left:970.5px;top:409.0px;font-size:11px;color:#111;letter-spacing:0.000px;">1</span>
<span class="t" style="left:73.4px;top:436.0px;font-size:11px;color:#111;letter-spacing:0.363px;">222</span>
<span class="t" style="left:157.3px;top:436.0px;font-size:11px;color:#111;letter-spacing:0.000px;">0</span>
<span class="t" style="left:488.4px;top:436.0px;font-size:11px;color:#111;letter-spacing:0.383px;">2.1.1.3.001</span>
<span class="t" style="left:619.3px;top:436.0px;font-size:11px;color:#111;letter-spacing:0.128px;">790</span>
<span class="t" style="left:711.7px;top:436.0px;font-size:11px;color:#111;letter-spacing:-0.274px;">Encargos</span>
<span class="t" style="left:970.5px;top:436.0px;font-size:11px;color:#111;letter-spacing:0.000px;">1</span>
<span class="t" style="left:73.4px;top:463.0px;font-size:11px;color:#111;letter-spacing:0.363px;">212</span>
<span class="t" style="left:157.3px;top:463.0px;font-size:11px;color:#111;letter-spacing:0.000px;">0</span>
<span class="t" style="left:488.4px;top:463.0px;font-size:11px;color:#111;letter-spacing:0.383px;">2.1.1.2.001</span>
<span class="t" style="left:619.3px;top:463.0px;font-size:11px;color:#111;letter-spacing:0.163px;">772</span>
<span class="t" style="left:711.8px;top:463.0px;font-size:11px;color:#111;letter-spacing:-0.288px;">Salários</span>
<span class="t" style="left:970.5px;top:463.0px;font-size:11px;color:#111;letter-spacing:0.000px;">1</span>
<span class="t" style="left:53.9px;top:668.0px;font-size:11px;color:#111;letter-spacing:0.000px;">0</span>
<span class="t" style="left:28.1px;top:701.0px;font-size:11px;color:#111;letter-spacing:-0.435px;">Sistema</span>
<span class="t" style="left:100.4px;top:701.0px;font-size:11px;color:#111;letter-spacing:-0.227px;">Mensagens</span>
<span class="t" style="left:190.5px;top:701.0px;font-size:11px;color:#111;letter-spacing:-0.192px;">Folha de Pagamento</span>
<span class="t" style="left:348.8px;top:701.0px;font-size:11px;color:#111;letter-spacing:-0.008px;">Competência : 6/2024</span>
<span class="t" style="left:484.8px;top:701.0px;font-size:11px;color:#111;letter-spacing:0.099px;">Caixa : 6</span>
<span class="t" style="left:557.2px;top:701.0px;font-size:11px;color:#111;letter-spacing:0.036px;">Período : 1</span>
</div>
</body></html>
